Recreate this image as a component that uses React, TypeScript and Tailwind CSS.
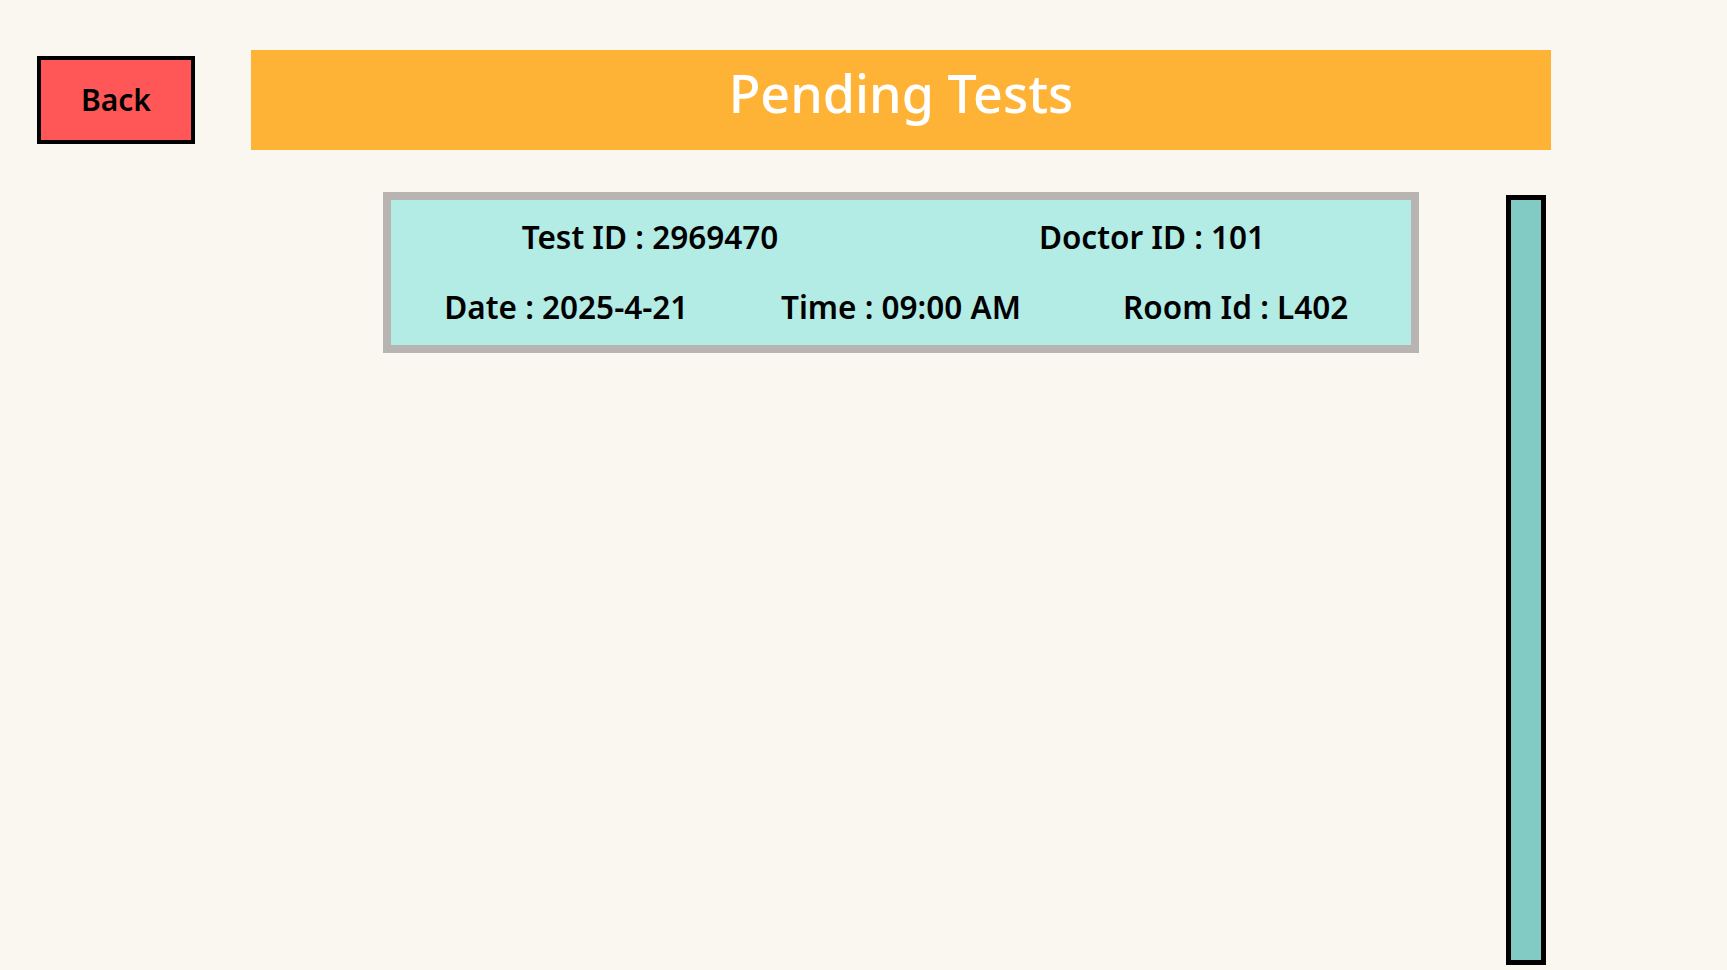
import React from "react";

export default function App() {
  return (
    <div
      className="w-[1727px] h-[970px] overflow-hidden bg-[#faf7f0]"
      style={{ fontFamily: '"Noto Sans", sans-serif' }}
    >
      <div className="flex items-start">
        <button className="ml-[37px] mt-[56px] w-[158px] h-[88px] border-4 border-black bg-[#ff5757] text-[30px] font-semibold text-black flex items-center justify-center leading-none">
          Back
        </button>
        <div className="ml-[56px] mt-[50px] w-[1300px] h-[100px] bg-[#ffb336] flex items-start justify-center pt-[17px]">
          <h1 className="text-[52px] text-white font-medium leading-none">Pending Tests</h1>
        </div>
      </div>
      <div className="flex items-start ml-[251px] mt-[42px]">
        <div className="ml-[132px] w-[1036px] h-[161px] border-8 border-[#b8b4b2] bg-[#b3ebe5] px-[8px] pt-[15px] text-[31.5px] font-semibold text-black leading-none">
          <div className="grid grid-cols-2 text-center h-[44px] items-center">
            <span>Test ID : 2969470</span>
            <span>Doctor ID : 101</span>
          </div>
          <div className="grid grid-cols-3 text-center h-[44px] items-center mt-[26px]">
            <span>Date : 2025-4-21</span>
            <span>Time : 09:00 AM</span>
            <span>Room Id : L402</span>
          </div>
        </div>
        <div className="ml-[87px] mt-[3px] w-[40px] h-[770px] border-[5px] border-black bg-[#82cbc4]" />
      </div>
    </div>
  );
}
